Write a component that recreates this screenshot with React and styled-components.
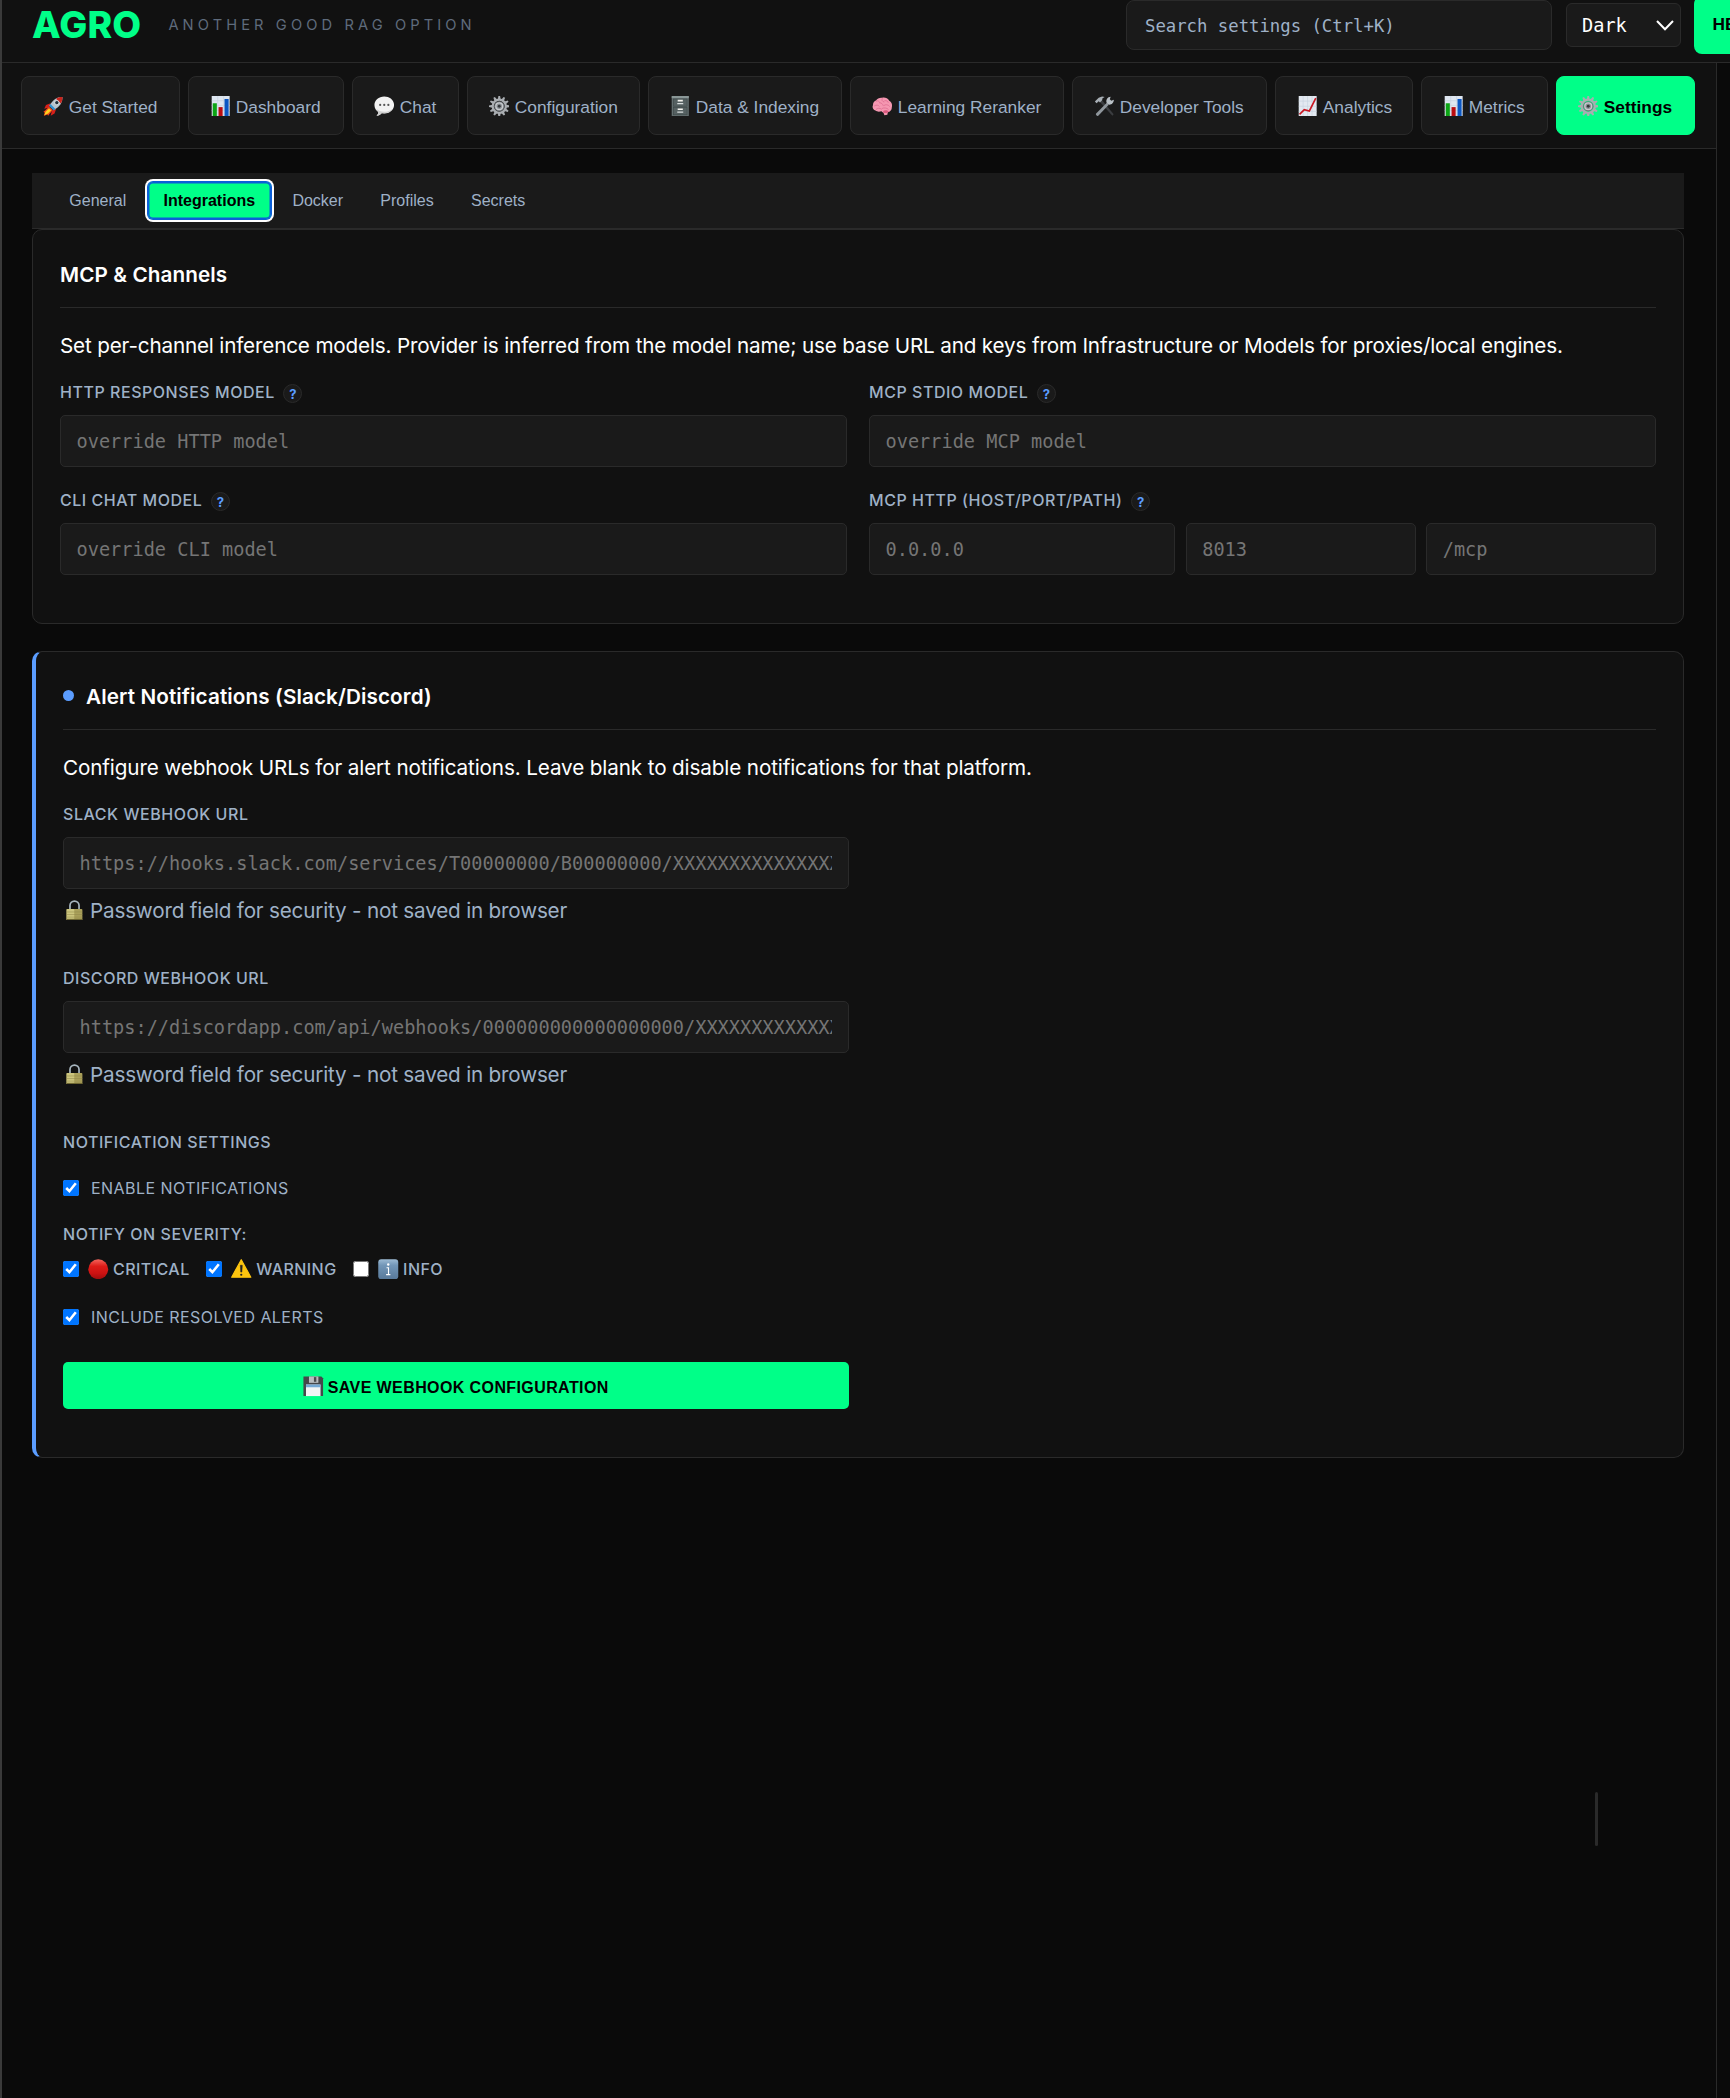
import React from "react";
import styled, { createGlobalStyle, css } from "styled-components";

const color = {
  page: "#0a0a0a",
  panel: "#111111",
  raised: "#1a1a1a",
  line: "#2a2a2a",
  text: "#ffffff",
  muted: "#9fb1c7",
  faint: "#5f6b7c",
  accent: "#00ff88",
  link: "#5b9dff",
  placeholder: "#757575",
};

const sans = `Inter, "Noto Sans", sans-serif`;
const arial = `"Liberation Sans", Arial, sans-serif`;
const mono = `"DejaVu Sans Mono", "Liberation Mono", monospace`;

const GlobalStyle = createGlobalStyle`
  *, *::before, *::after { box-sizing: border-box; }
  body {
    margin: 0;
    background: ${color.page};
    color: ${color.text};
    font-family: ${sans};
  }
  button, input { font: inherit; margin: 0; }
`;

const Shell = styled.div`
  display: flex;
  flex-direction: column;
  width: 1730px;
  height: 2098px;
  overflow: hidden;
  border-left: 2px solid #3a3a3a;
`;

/* Header */

const Header = styled.header`
  display: flex;
  align-items: center;
  justify-content: space-between;
  flex: none;
  height: 63px;
  padding: 0 0 12px 30px;
  overflow: hidden;
  background: ${color.panel};
  border-bottom: 1px solid ${color.line};
`;

const Brand = styled.div`
  display: flex;
  align-items: center;
  gap: 27px;
`;

const Logo = styled.h1`
  margin: 0;
  font-size: 37.3px;
  font-weight: 800;
  line-height: 48px;
  letter-spacing: 0.2px;
  color: ${color.accent};
`;

const Tagline = styled.span`
  font-size: 14.67px;
  line-height: 20px;
  letter-spacing: 4.1px;
  color: ${color.faint};
`;

const Actions = styled.div`
  display: flex;
  align-items: center;
  flex: none;
  margin-right: -66px;
`;

const SearchInput = styled.input`
  width: 426px;
  height: 50px;
  margin-right: 14px;
  padding: 2px 18px 0;
  background: ${color.raised};
  border: 1px solid ${color.line};
  border-radius: 8px;
  color: ${color.text};
  font-family: ${mono};
  font-size: 17.3px;
  &::placeholder { color: ${color.muted}; opacity: 1; }
`;

const ThemeSelect = styled.button`
  display: flex;
  align-items: center;
  justify-content: space-between;
  width: 115px;
  height: 44px;
  margin-right: 13px;
  padding: 0 6px 0 15px;
  background: ${color.raised};
  border: 1px solid ${color.line};
  border-radius: 6px;
  color: ${color.text};
  font-family: ${mono};
  font-size: 18.6px;
`;

const HealthButton = styled.button`
  width: 102px;
  height: 58px;
  padding: 0 0 2px 18.5px;
  background: ${color.accent};
  border: 0;
  border-radius: 8px;
  color: #000;
  font-family: ${arial};
  font-size: 17.33px;
  font-weight: 700;
  text-align: left;
  white-space: nowrap;
`;

/* Main navigation */

const Workspace = styled.div`
  display: flex;
  flex-direction: column;
  flex: 1;
  width: 1715px;
  border-right: 1px solid ${color.line};
`;

const TabBar = styled.nav`
  display: flex;
  gap: 8px;
  flex: none;
  padding: 13px 19px;
  background: ${color.panel};
  border-bottom: 1px solid ${color.line};
`;

const Tab = styled.button`
  display: flex;
  align-items: center;
  gap: 5.5px;
  flex: none;
  width: ${(p) => p.$width}px;
  height: 59px;
  padding: 3px 0 0 20.8px;
  background: ${color.raised};
  border: 1px solid ${color.line};
  border-radius: 8px;
  color: ${color.muted};
  font-family: ${arial};
  font-size: 17.33px;
  white-space: nowrap;
  ${(p) =>
    p.$active &&
    css`
      background: ${color.accent};
      border-color: ${color.accent};
      color: #000;
      font-weight: 700;
    `}
`;

const Content = styled.main`
  display: flex;
  flex-direction: column;
  padding: 24px 32px 0 30px;
`;

const SubTabBar = styled.nav`
  display: flex;
  align-items: center;
  gap: 5.3px;
  height: 56px;
  padding: 0 21.3px;
  background: ${color.raised};
  border-bottom: 1px solid ${color.line};
`;

const SubTab = styled.button`
  height: 37px;
  padding: 0 16px;
  background: transparent;
  border: 0;
  border-radius: 5px;
  color: ${color.muted};
  font-family: ${arial};
  font-size: 16px;
  ${(p) =>
    p.$active &&
    css`
      background: ${color.accent};
      color: #000;
      font-weight: 700;
      box-shadow: 0 0 0 1px #0b5fd8, 0 0 0 3px #fff, inset 0 0 0 1.5px #0b5fd8;
    `}
`;

/* Cards */

const Card = styled.section`
  padding: 27px 27px 48px;
  background: ${color.panel};
  border: 1px solid ${color.line};
  border-radius: 10px;
  ${(p) => p.$accent && css`border-left: 4px solid ${color.link};`}
  & + & { margin-top: 27px; }
`;

const CardTitle = styled.h2`
  display: flex;
  align-items: center;
  gap: 12px;
  height: 51px;
  margin: 0;
  padding-bottom: 15px;
  border-bottom: 1px solid ${color.line};
  font-size: 20.7px;
  font-weight: 600;
  letter-spacing: 0.1px;
`;

const Dot = styled.span`
  width: 11px;
  height: 11px;
  margin-top: -3px;
  border-radius: 50%;
  background: ${color.link};
`;

const Lead = styled.p`
  margin: 22px 0 20px;
  font-size: 20.7px;
  line-height: 32px;
  letter-spacing: ${(p) => p.$tracking}px;
  white-space: nowrap;
`;

const FieldGrid = styled.div`
  display: grid;
  grid-template-columns: 1fr 1fr;
  gap: 23px 22px;
`;

const HalfColumn = styled.div`
  display: flex;
  flex-direction: column;
  width: 786px;
`;

const Field = styled.div`
  display: flex;
  flex-direction: column;
  min-width: 0;
`;

const Label = styled.label`
  display: flex;
  align-items: center;
  gap: 8.5px;
  height: 20px;
  margin-bottom: ${(p) => p.$after ?? 13}px;
  color: ${color.muted};
  font-size: 16px;
  font-weight: 500;
  letter-spacing: 0.54px;
  white-space: nowrap;
`;

const Help = styled.span`
  display: flex;
  align-items: center;
  justify-content: center;
  width: 19px;
  height: 19px;
  margin-top: 3px;
  background: ${color.raised};
  border: 1px solid ${color.line};
  border-radius: 50%;
  color: ${color.link};
  font-size: 13px;
  font-weight: 700;
  letter-spacing: 0;
`;

const TextInput = styled.input`
  width: 100%;
  min-width: 0;
  height: 52px;
  padding: 0 16px 0 15.5px;
  background: ${color.raised};
  border: 1px solid ${color.line};
  border-radius: 5px;
  color: ${color.text};
  font-family: ${mono};
  font-size: 18.6px;
  &::placeholder { color: ${color.placeholder}; opacity: 1; }
`;

const SplitInputs = styled.div`
  display: grid;
  grid-template-columns: 306px 1fr 1fr;
  gap: 10.7px;
`;

const Note = styled.p`
  display: flex;
  align-items: center;
  gap: 5.5px;
  margin: 6px 0 41px;
  padding-left: 1px;
  color: ${color.muted};
  font-size: 20.7px;
  line-height: 32px;
  letter-spacing: -0.2px;
  white-space: nowrap;
`;

const CheckRow = styled.div`
  display: flex;
  align-items: center;
  gap: 16.5px;
  height: 20px;
  margin-bottom: ${(p) => p.$after}px;
`;

const CheckLabel = styled.label`
  display: flex;
  align-items: center;
  gap: ${(p) => p.$gap ?? 12}px;
  color: ${color.muted};
  font-size: 16px;
  font-weight: ${(p) => p.$weight ?? 400};
  letter-spacing: 0.45px;
  white-space: nowrap;
`;

const IconText = styled.span`
  display: flex;
  align-items: center;
  gap: 4.5px;
`;

const Check = styled.input.attrs({ type: "checkbox" })`
  width: 16px;
  height: 16px;
  accent-color: #0075ff;
`;

const SaveButton = styled.button`
  display: flex;
  align-items: center;
  justify-content: center;
  gap: 4px;
  height: 47px;
  padding: 4px 0 0;
  background: ${color.accent};
  border: 0;
  border-radius: 5px;
  color: #000;
  font-family: ${arial};
  font-size: 16px;
  font-weight: 700;
  letter-spacing: 0.4px;
`;

const PanelGrip = styled.div`
  position: fixed;
  left: 1595px;
  top: 1792px;
  width: 3px;
  height: 54px;
  border-radius: 2px;
  background: ${color.line};
`;

/* Icons */

const Glyph = styled.svg.attrs({ viewBox: "0 0 24 24" })`
  flex: none;
  width: 20.5px;
  height: 20.5px;
  margin-top: ${(p) => p.$lift ?? -2}px;
`;

const Rocket = () => (
  <Glyph>
    <path d="M9 8.500L3.500 10.500 1.500 15l6-1.500zM15.500 15l-2 5.500-4.500 2.500 1.500-6z" fill="#d8201a" />
    <path d="M22.800 1.200C16 1 11.500 4.500 7.500 11.500l5 5C19.500 12.500 23 8 22.800 1.200z" fill="#b7c3cd" />
    <path d="M22.800 1.200C20 1 17.500 1.800 15.300 3.200l5.500 5.500C22.200 6.500 23 4 22.800 1.200z" fill="#c9251d" />
    <path d="M8.800 9.500l5.700 5.700-2 1.800-5.500-5.500z" fill="#2e8fd0" />
    <circle cx="16.200" cy="7.800" r="2.500" fill="#21313d" stroke="#eef3f6" strokeWidth=".9" />
    <path d="M7 12.500L2.500 17l-2 1.500L2 19.500l-1 3.800 4-1.500 1 1.200 2-2.500 3.500-4z" fill="#f4471a" />
    <path d="M7 14.500l-4 4-1.500 4L6 20.500l3.500-3.800z" fill="#ffd21f" />
  </Glyph>
);

const BarChart = () => (
  <Glyph>
    <rect x="2" y="0" width="21" height="24" fill="#dfe7f1" />
    <path d="M2 5.500h21M2 11h21M2 17h21M9 0v24M16 0v24" stroke="#c4d0de" strokeWidth=".7" />
    <rect x="3.200" y="8.500" width="4.800" height="15.500" fill="#0ca515" />
    <rect x="10" y="13" width="4.800" height="11" fill="#ba0c10" />
    <rect x="17" y="3.500" width="4.800" height="20.500" fill="#0b57c4" />
  </Glyph>
);

const Bubble = () => (
  <Glyph>
    <path d="M12 .5C5.500.5.500 4.800.500 10.500c0 4 2 6.500 4.500 8.200.200 2-.700 3.300-2 4.300 2.500.100 4.700-1 6-2.800l3 .3c6.500 0 11.500-4.300 11.500-10S18.500.5 12 .5z" fill="#f2f2f2" />
    <path d="M3 15c3 4 13 5.500 18.500 0-2 4-6 5.500-10 5.200L9 20c-1.500 2-3.500 3-6 3 1.500-1.200 2.200-2.500 2-4.500-1-.8-1.800-2-2-3.500z" fill="#cfcfcf" />
    <circle cx="7.200" cy="10.500" r="1.300" fill="#555" />
    <circle cx="12" cy="10.500" r="1.300" fill="#555" />
    <circle cx="16.800" cy="10.500" r="1.300" fill="#555" />
  </Glyph>
);

const teeth = Array.from({ length: 12 }, (_, i) => i * 30);

const Gear = () => (
  <Glyph>
    {teeth.map((a) => (
      <path key={a} d="M10.300 4L11 0h2l.7 4z" fill="#a9adb1" transform={`rotate(${a} 12 12)`} />
    ))}
    <circle cx="12" cy="12" r="7.700" fill="none" stroke="#a9adb1" strokeWidth="2.600" />
    <circle cx="12" cy="12" r="6" fill="#70757a" />
    <circle cx="12" cy="12" r="4" fill="#8b9095" stroke="#c8cbce" strokeWidth="1.600" />
    <circle cx="12" cy="12" r="1.700" fill="#33373a" />
  </Glyph>
);

const Cabinet = () => (
  <Glyph>
    <rect x="2" y="0" width="20" height="24" rx=".8" fill="#657071" />
    <rect x="2" y="0" width="20" height="2.500" fill="#8a9797" />
    <rect x="4" y="3.500" width="16" height="8.500" fill="#566162" stroke="#3f494a" strokeWidth=".8" />
    <rect x="4" y="13.500" width="16" height="8.500" fill="#566162" stroke="#3f494a" strokeWidth=".8" />
    <path d="M9 4.500h6v2H9zM9 14.500h6v2H9z" fill="#f4f4ef" />
    <path d="M8.500 8.800h7M8.500 18.800h7" stroke="#d7dddd" strokeWidth="1.500" />
  </Glyph>
);

const Brain = () => (
  <Glyph>
    <path d="M12 2C9 1.500 6 3 5 5c-2.500.8-4 3-3.800 5.500C0 13 1 16.500 4 17c2 1.700 5 1.500 7 .8 1 1.200 2 1.200 2.500 1.700l1 3 3.500-.5.500-3c3-.3 5-3 4.700-6 .8-3-.2-6-3-7.500C18.500 2.500 15 1.300 12 2z" fill="#f597b1" />
    <path d="M5 6c2-1 3.500 0 4 1.500M3 11.500c2-1.500 4.500-1 5.500.5M12 3c-1 2 0 3.500 2 4M9 8c2 0 3.500 1 4 3M15 5.500c2-.5 3.500.5 4 2M14 11c2-1.500 5-1 6.500 1M5 15.500c1.500-1.500 4-1.500 6-.2M12 14.500c2-1 5-.8 7 1" stroke="#d9668a" strokeWidth=".8" fill="none" strokeLinecap="round" />
    <path d="M13 17.500c2-1.500 5-1 6.500.5-1 2-4 2.500-6 1.500z" fill="#dc5b80" />
  </Glyph>
);

const Tools = () => (
  <Glyph>
    <path d="M7 7l14.500 16 1.500-1.500L9.500 5z" fill="#3b3d40" />
    <path d="M1 6.500L5.500 2l4-1.500 3 .7-2.500 1.300L9.500 5 7 7.500 5.500 6 3 8.500z" fill="#a8afb5" />
    <path d="M2.500 20.500L15 8l2.300 2.300L5 23c-1.500 1-3.500-1-2.500-2.500z" fill="#8f969c" />
    <path d="M15 8.500c-1.200-2.500-.5-5.500 2-7l2.500-.7-1 3 1.700 1.700 3-1c0 3.500-2.500 6-5.500 5.800z" fill="#b9c0c6" />
  </Glyph>
);

const LineChart = () => (
  <Glyph>
    <rect x="2" y="0" width="21" height="24" fill="#e3e9f1" />
    <path d="M2 6h21M2 12h21M2 18h21M7.200 0v24M12.400 0v24M17.600 0v24" stroke="#c6d1de" strokeWidth=".7" />
    <path d="M3 21.500L8.500 16l6 1.500L22 2.500" stroke="#c91722" strokeWidth="1.900" fill="none" />
  </Glyph>
);

const Lock = () => (
  <Glyph $lift={-2}>
    <path d="M7 11V6.500a5.300 5.300 0 0 1 10.600 0V11" stroke="#a7b5be" strokeWidth="2" fill="none" />
    <rect x="3" y="10.500" width="18.500" height="13.300" rx="1" fill="#aaa05a" />
    <rect x="3" y="10.500" width="9" height="13.300" rx="1" fill="#cdc67e" />
    <path d="M3 14h18.500M3 17h18.500M3 20h18.500" stroke="#8f8648" strokeWidth=".6" />
    <path d="M3 22.800h18.500" stroke="#6e6631" strokeWidth="1.500" />
  </Glyph>
);

const RedCircle = () => (
  <Glyph $lift={0}>
    <defs>
      <linearGradient id="criticalShade" x1="0" y1="0" x2="0" y2="1">
        <stop offset="0" stopColor="#f4655c" />
        <stop offset=".35" stopColor="#de1c18" />
        <stop offset=".7" stopColor="#cc1212" />
        <stop offset="1" stopColor="#9e0d0d" />
      </linearGradient>
    </defs>
    <circle cx="12" cy="12" r="11.600" fill="url(#criticalShade)" />
  </Glyph>
);

const Warning = () => (
  <Glyph $lift={-1}>
    <path d="M12 2L23.200 22.500H.8z" fill="#fdc50f" stroke="#fdc50f" strokeWidth="1.400" strokeLinejoin="round" />
    <path d="M10.900 8.500h2.300l-.5 8h-1.300z" fill="#222" stroke="#222" strokeWidth=".6" />
    <circle cx="12" cy="19.600" r="1.300" fill="#222" />
  </Glyph>
);

const Info = () => (
  <Glyph $lift={0}>
    <defs>
      <linearGradient id="infoShade" x1="0" y1="0" x2="0" y2="1">
        <stop offset="0" stopColor="#9dbbd4" />
        <stop offset=".3" stopColor="#7397b8" />
        <stop offset="1" stopColor="#58799a" />
      </linearGradient>
    </defs>
    <rect x=".3" y=".3" width="23.400" height="23.400" rx="3.500" fill="url(#infoShade)" />
    <circle cx="12" cy="6.500" r="1.400" fill="#fff" />
    <path d="M10 10.200h2.300V18M9.500 18.300h5" stroke="#fff" strokeWidth="1.300" fill="none" />
  </Glyph>
);

const Floppy = () => (
  <Glyph>
    <path d="M1 .5h20.500L23.500 2.500v21H.5V.5z" fill="#45474a" />
    <rect x="7" y=".5" width="11" height="7.500" fill="#b9bdc0" />
    <rect x="12.800" y="1.300" width="2.800" height="5.500" fill="#4a4c4f" />
    <rect x="3.500" y="10" width="17" height="13.500" fill="#f3f5f6" />
    <rect x="3.500" y="10" width="17" height="3.200" fill="#74a8d5" />
  </Glyph>
);

const ChevronIcon = styled.svg.attrs({ viewBox: "0 0 18 11" })`
  width: 18px;
  height: 11px;
`;

const tabs = [
  { label: "Get Started", Icon: Rocket, width: 159 },
  { label: "Dashboard", Icon: BarChart, width: 156 },
  { label: "Chat", Icon: Bubble, width: 107 },
  { label: "Configuration", Icon: Gear, width: 173 },
  { label: "Data & Indexing", Icon: Cabinet, width: 194 },
  { label: "Learning Reranker", Icon: Brain, width: 214 },
  { label: "Developer Tools", Icon: Tools, width: 195 },
  { label: "Analytics", Icon: LineChart, width: 138 },
  { label: "Metrics", Icon: BarChart, width: 127 },
  { label: "Settings", Icon: Gear, width: 139, active: true },
];

const subTabs = ["General", "Integrations", "Docker", "Profiles", "Secrets"];

const severities = [
  { label: "CRITICAL", Icon: RedCircle, checked: true },
  { label: "WARNING", Icon: Warning, checked: true },
  { label: "INFO", Icon: Info, checked: false },
];

function ModelField({ label, placeholder, children }) {
  return (
    <Field>
      <Label>
        {label}
        <Help>?</Help>
      </Label>
      {children || <TextInput placeholder={placeholder} />}
    </Field>
  );
}

function WebhookField({ label, placeholder }) {
  return (
    <Field>
      <Label>{label}</Label>
      <TextInput type="password" placeholder={placeholder} />
      <Note>
        <Lock />
        Password field for security - not saved in browser
      </Note>
    </Field>
  );
}

export default function App() {
  return (
    <Shell>
      <GlobalStyle />
      <Header>
        <Brand>
          <Logo>AGRO</Logo>
          <Tagline>ANOTHER GOOD RAG OPTION</Tagline>
        </Brand>
        <Actions>
          <SearchInput placeholder="Search settings (Ctrl+K)" />
          <ThemeSelect>
            Dark
            <ChevronIcon>
              <path d="M1 1l8 8.300L17 1" fill="none" stroke="#fff" strokeWidth="2" />
            </ChevronIcon>
          </ThemeSelect>
          <HealthButton>HEALTH</HealthButton>
        </Actions>
      </Header>

      <Workspace>
        <TabBar>
          {tabs.map(({ label, Icon, width, active }) => (
            <Tab key={label} $width={width} $active={active}>
              <Icon />
              {label}
            </Tab>
          ))}
        </TabBar>

        <Content>
          <SubTabBar>
            {subTabs.map((name) => (
              <SubTab key={name} $active={name === "Integrations"}>
                {name}
              </SubTab>
            ))}
          </SubTabBar>

          <Card>
            <CardTitle>MCP &amp; Channels</CardTitle>
            <Lead $tracking={-0.174}>
              Set per-channel inference models. Provider is inferred from the model name; use base URL and keys from
              Infrastructure or Models for proxies/local engines.
            </Lead>
            <FieldGrid>
              <ModelField label="HTTP RESPONSES MODEL" placeholder="override HTTP model" />
              <ModelField label="MCP STDIO MODEL" placeholder="override MCP model" />
              <ModelField label="CLI CHAT MODEL" placeholder="override CLI model" />
              <ModelField label="MCP HTTP (HOST/PORT/PATH)">
                <SplitInputs>
                  <TextInput placeholder="0.0.0.0" />
                  <TextInput placeholder="8013" />
                  <TextInput placeholder="/mcp" />
                </SplitInputs>
              </ModelField>
            </FieldGrid>
          </Card>

          <Card $accent>
            <CardTitle>
              <Dot />
              Alert Notifications (Slack/Discord)
            </CardTitle>
            <Lead $tracking={-0.132}>
              Configure webhook URLs for alert notifications. Leave blank to disable notifications for that platform.
            </Lead>
            <HalfColumn>
              <WebhookField
                label="SLACK WEBHOOK URL"
                placeholder="https://hooks.slack.com/services/T00000000/B00000000/XXXXXXXXXXXXXXXXXXXX"
              />
              <WebhookField
                label="DISCORD WEBHOOK URL"
                placeholder="https://discordapp.com/api/webhooks/000000000000000000/XXXXXXXXXXXXXXXXXXXX"
              />
              <Label $after={26}>NOTIFICATION SETTINGS</Label>
              <CheckRow $after={26}>
                <CheckLabel>
                  <Check defaultChecked />
                  ENABLE NOTIFICATIONS
                </CheckLabel>
              </CheckRow>
              <Label $after={15}>NOTIFY ON SEVERITY:</Label>
              <CheckRow $after={28}>
                {severities.map(({ label, Icon, checked }) => (
                  <CheckLabel key={label} $gap={9} $weight={500}>
                    <Check defaultChecked={checked} />
                    <IconText>
                      <Icon />
                      {label}
                    </IconText>
                  </CheckLabel>
                ))}
              </CheckRow>
              <CheckRow $after={35}>
                <CheckLabel>
                  <Check defaultChecked />
                  INCLUDE RESOLVED ALERTS
                </CheckLabel>
              </CheckRow>
              <SaveButton>
                <Floppy />
                SAVE WEBHOOK CONFIGURATION
              </SaveButton>
            </HalfColumn>
          </Card>
        </Content>
      </Workspace>
      <PanelGrip />
    </Shell>
  );
}
